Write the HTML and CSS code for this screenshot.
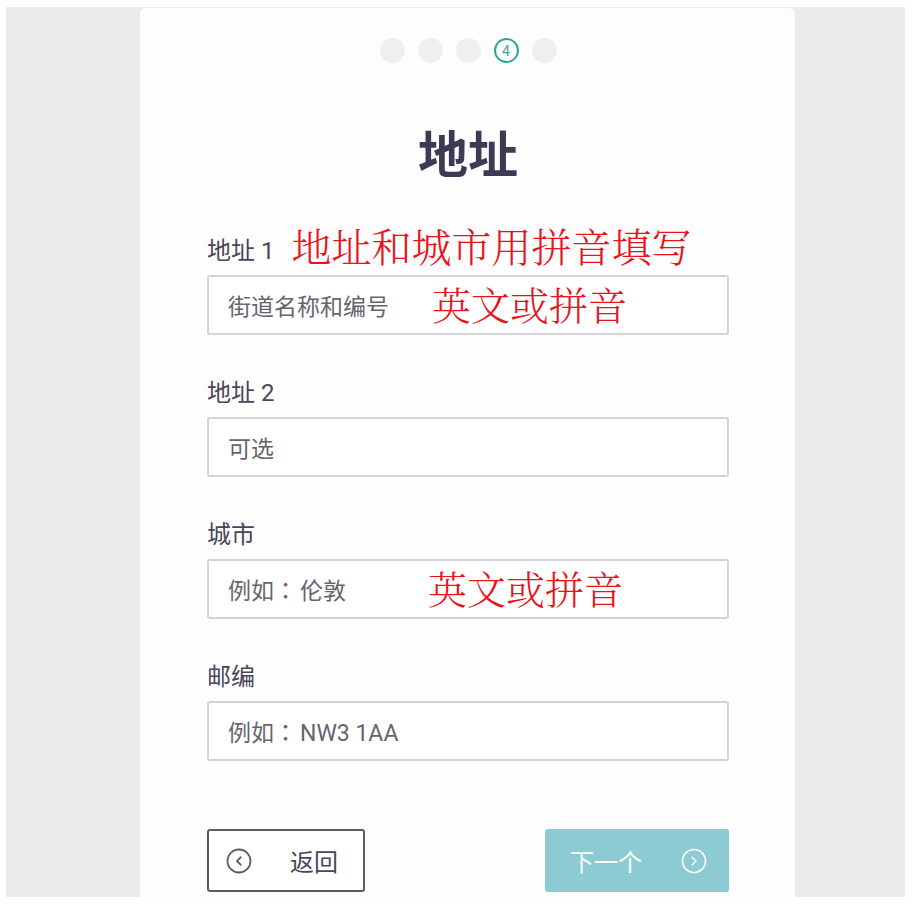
FILE: index.html
```html
<!DOCTYPE html>
<html lang="zh-CN">
<head>
<meta charset="utf-8">
<title>地址</title>
<link rel="stylesheet" href="styles.css">
</head>
<body>
<div class="frame">
  <main class="card">
    <div class="steps">
      <span class="dot"></span>
      <span class="dot"></span>
      <span class="dot"></span>
      <span class="dot active">4</span>
      <span class="dot"></span>
    </div>
    <h1 class="title">地址</h1>
    <form class="form">
      <div class="field">
        <div class="label">地址 1<span class="note note-lg">地址和城市用拼音填写</span></div>
        <div class="input"><span class="ph">街道名称和编号</span><span class="note note-in n1">英文或拼音</span></div>
      </div>
      <div class="field">
        <div class="label">地址 2</div>
        <div class="input"><span class="ph">可选</span></div>
      </div>
      <div class="field">
        <div class="label">城市</div>
        <div class="input"><span class="ph">例如<span class="colon" lang="ja">：</span>伦敦</span><span class="note note-in n3">英文或拼音</span></div>
      </div>
      <div class="field">
        <div class="label">邮编</div>
        <div class="input"><span class="ph">例如<span class="colon" lang="ja">：</span>NW3 1AA</span></div>
      </div>
      <div class="actions">
        <button type="button" class="btn btn-back">
          <svg class="ico" width="26" height="26" viewBox="0 0 26 26"><circle cx="13" cy="13" r="11.5" fill="none" stroke="#5f5c6a" stroke-width="1.8"/><path d="M14.8 9.2 L11 13 L14.8 16.8" fill="none" stroke="#5f5c6a" stroke-width="1.8" stroke-linecap="round" stroke-linejoin="round"/></svg>
          <span class="btn-text">返回</span>
        </button>
        <button type="button" class="btn btn-next">
          <span class="btn-text">下一个</span>
          <svg class="ico" width="26" height="26" viewBox="0 0 26 26"><circle cx="13" cy="13" r="11.5" fill="none" stroke="#ffffff" stroke-width="1.6"/><path d="M11.2 9.2 L15 13 L11.2 16.8" fill="none" stroke="#ffffff" stroke-width="1.6" stroke-linecap="round" stroke-linejoin="round"/></svg>
        </button>
      </div>
    </form>
  </main>
</div>
</body>
</html>
```

FILE: styles.css
```css
html, body {
  margin: 0;
  padding: 0;
  background: #ffffff;
}

body {
  font-family: Roboto, "Noto Sans CJK SC", "Noto Sans", sans-serif;
}

.frame {
  margin: 7px 10px 0 6px;
  height: 890px;
  background: #ebebed;
  padding-left: 134px;
  box-sizing: border-box;
  overflow: hidden;
}

.card {
  width: 655px;
  height: 889px;
  margin-top: 1px;
  background: #fdfdfd;
  border-radius: 6px 6px 0 0;
  box-sizing: border-box;
  padding: 30px 66px 0 67px;
}

.steps {
  display: flex;
  justify-content: center;
  gap: 13px;
  height: 25px;
}

.dot {
  width: 25px;
  height: 25px;
  border-radius: 50%;
  background: #efeff0;
  box-sizing: border-box;
  display: flex;
  align-items: center;
  justify-content: center;
  font-size: 14px;
  line-height: 1;
}

.dot.active {
  background: #ffffff;
  border: 2px solid #2ea59c;
  color: #3aa59c;
}

.title {
  margin: 62px 0 0;
  height: 52px;
  font-size: 50px;
  line-height: 52px;
  font-weight: 700;
  text-align: center;
  color: #3e3a55;
  font-family: "Noto Sans CJK SC", sans-serif;
}

.form {
  margin-top: 56px;
}

.field {
  margin-bottom: 40px;
}

.label {
  display: flex;
  align-items: center;
  height: 30px;
  font-size: 24px;
  color: #4a4659;
  margin-bottom: 12px;
}

.note {
  color: #e8141c;
  font-family: "Noto Serif CJK SC", "AR PL UMing CN", "Noto Sans CJK SC", serif;
  font-weight: 300;
  white-space: nowrap;
}

.note-lg {
  font-size: 40px;
  line-height: 30px;
  margin-left: 17px;
  position: relative;
  top: -3px;
}

.input {
  position: relative;
  height: 60px;
  border: 2px solid #d3d3d9;
  border-radius: 3px;
  box-sizing: border-box;
  background: #ffffff;
  display: flex;
  align-items: center;
  padding-left: 19px;
}

.ph {
  font-size: 23px;
  color: #66646e;
}

.colon {
  font-family: "Noto Sans CJK JP", "Noto Sans CJK SC", sans-serif;
  margin-right: 3px;
}

.note-in {
  position: absolute;
  top: 50%;
  transform: translateY(-53%);
  font-size: 39px;
  line-height: 1;
}

.n1 { left: 223px; }
.n3 { left: 219px; }

.actions {
  display: flex;
  justify-content: space-between;
  margin-top: 68px;
}

.btn {
  height: 63px;
  border-radius: 3px;
  box-sizing: border-box;
  display: flex;
  align-items: center;
  font-family: "Noto Sans CJK SC", sans-serif;
  font-size: 24px;
  padding: 0;
  cursor: pointer;
}

.btn-back {
  width: 158px;
  background: #ffffff;
  border: 2px solid #5d5a68;
  color: #4a4659;
  padding-left: 17px;
}

.btn-back .btn-text {
  margin-left: 38px;
}

.btn-next {
  width: 184px;
  background: #8ccbd1;
  border: none;
  color: #ffffff;
  padding-left: 25px;
}

.btn-next .ico {
  margin-left: 39px;
}
```
